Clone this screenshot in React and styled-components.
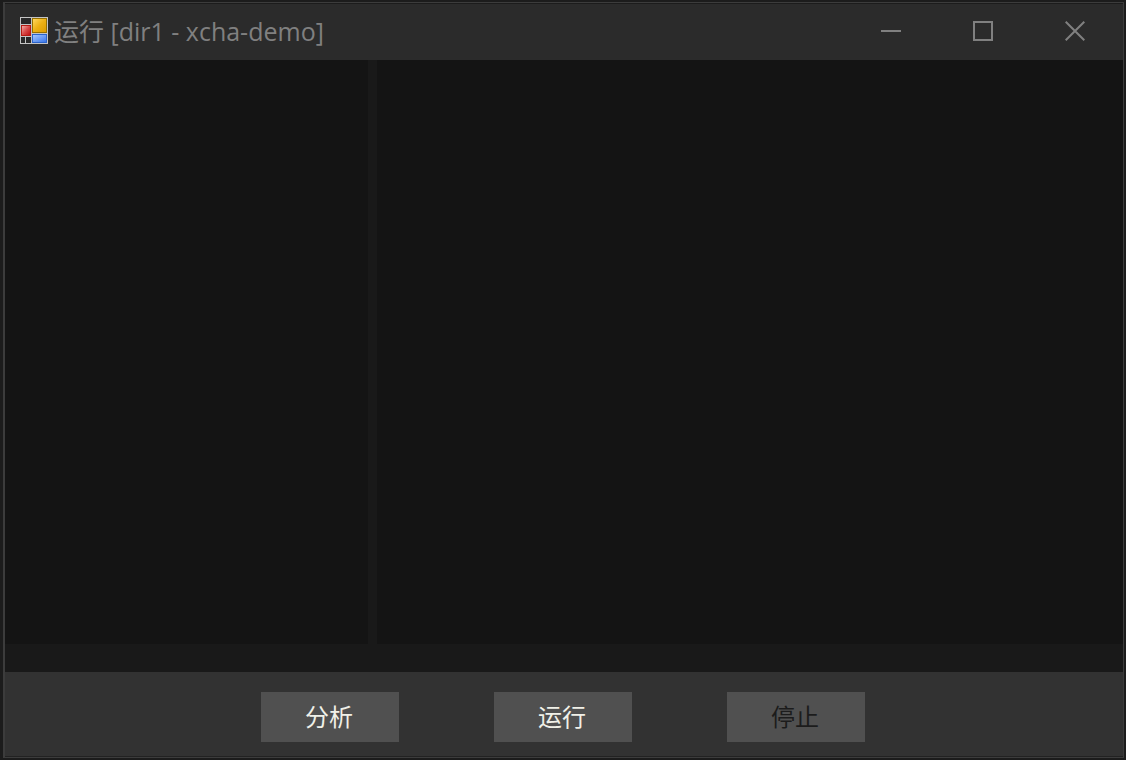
import React from "react";
import styled, { createGlobalStyle } from "styled-components";

const GlobalStyle = createGlobalStyle`
  * { box-sizing: border-box; }
  body {
    margin: 0;
    background: #1c1c1c;
    font-family: "Open Sans", "Noto Sans CJK SC", sans-serif;
  }
`;

const Desktop = styled.div`
  display: flex;
  min-height: 100vh;
  padding: 2px 2px 2px 3px;
`;

const Window = styled.main`
  flex: 1;
  display: flex;
  flex-direction: column;
  border: 1px solid #3c3c3c;
  border-left-width: 2px;
  background: #191919;
`;

const TitleBar = styled.header`
  display: flex;
  align-items: center;
  height: 57px;
  padding: 0 2px 4px 15px;
  border-top: 1px solid #1c1c1c;
  background: #2b2b2b;
  color: #808080;
`;

const Title = styled.h1`
  flex: 1;
  margin: 0;
  padding: 2px 0 0 6px;
  font-family: "Open Sans", "Noto Sans CJK SC", sans-serif;
  font-size: 25px;
  font-weight: 400;
  line-height: 32px;
`;

const WindowControls = styled.div`
  display: flex;
  align-self: stretch;
`;

const ControlButton = styled.button`
  display: flex;
  align-items: center;
  justify-content: center;
  width: 92px;
  padding: 2px 0 0;
  border: 0;
  background: transparent;
  color: inherit;
`;

const Workspace = styled.div`
  flex: 1;
  display: grid;
  grid-template-columns: 363fr 746fr;
  gap: 9px;
  padding-bottom: 28px;
`;

const Pane = styled.section`
  background: #141414;
`;

const ActionBar = styled.footer`
  display: flex;
  justify-content: center;
  gap: 95px;
  padding: 20px 2px 14px 0;
  background: #323232;
  border-bottom: 1px solid #222222;
`;

const ActionButton = styled.button`
  width: 138px;
  height: 50px;
  padding: 0 2px 2px 0;
  border: 0;
  background: #505050;
  color: #f0f0e8;
  font-family: "Noto Sans CJK SC", sans-serif;
  font-size: 24px;
  line-height: 32px;

  &:disabled {
    color: #1c1c1c;
  }
`;

function AppIcon() {
  return (
    <svg width="28" height="27" viewBox="0 0 28 27" shapeRendering="crispEdges" aria-hidden="true">
      <defs>
        <linearGradient id="gold" x1="0" y1="0" x2="1" y2="1">
          <stop offset="0" stopColor="#ffd75e" />
          <stop offset="0.5" stopColor="#edb014" />
          <stop offset="1" stopColor="#dc9c00" />
        </linearGradient>
        <linearGradient id="ruby" x1="0" y1="0" x2="1" y2="1">
          <stop offset="0" stopColor="#f3aca8" />
          <stop offset="0.5" stopColor="#d94b49" />
          <stop offset="1" stopColor="#bd1012" />
        </linearGradient>
        <linearGradient id="azure" x1="0" y1="0" x2="1" y2="1">
          <stop offset="0" stopColor="#a3c5ff" />
          <stop offset="1" stopColor="#3a76ea" />
        </linearGradient>
      </defs>
      <rect width="28" height="27" fill="#c4c4c4" />
      <rect x="1" y="1" width="10" height="6" fill="#292929" />
      <rect x="1" y="8" width="10" height="11" fill="#b51a12" />
      <rect x="2" y="9" width="8" height="9" fill="url(#ruby)" />
      <rect x="1" y="20" width="4" height="6" fill="#292929" />
      <rect x="6" y="20" width="5" height="6" fill="#292929" />
      <rect x="12" y="1" width="15" height="15" fill="#967000" />
      <rect x="13" y="2" width="13" height="13" fill="url(#gold)" />
      <rect x="12" y="17" width="15" height="9" fill="#2b63c9" />
      <rect x="13" y="18" width="13" height="7" fill="url(#azure)" />
    </svg>
  );
}

function ControlIcon({ children }) {
  return (
    <svg width="20" height="20" viewBox="0 0 20 20" fill="none" stroke="currentColor" strokeWidth="2" aria-hidden="true">
      {children}
    </svg>
  );
}

export default function App() {
  return (
    <>
      <GlobalStyle />
      <Desktop>
        <Window>
          <TitleBar>
            <AppIcon />
            <Title>运行 [dir1 - xcha-demo]</Title>
            <WindowControls>
              <ControlButton type="button" aria-label="最小化">
                <ControlIcon><path d="M0 10H20" /></ControlIcon>
              </ControlButton>
              <ControlButton type="button" aria-label="最大化">
                <ControlIcon><path d="M1 1H19V19H1Z" /></ControlIcon>
              </ControlButton>
              <ControlButton type="button" aria-label="关闭">
                <ControlIcon><path d="M0.7 0.7L19.3 19.3M19.3 0.7L0.7 19.3" /></ControlIcon>
              </ControlButton>
            </WindowControls>
          </TitleBar>
          <Workspace>
            <Pane />
            <Pane />
          </Workspace>
          <ActionBar>
            <ActionButton type="button">分析</ActionButton>
            <ActionButton type="button">运行</ActionButton>
            <ActionButton type="button" disabled>停止</ActionButton>
          </ActionBar>
        </Window>
      </Desktop>
    </>
  );
}
